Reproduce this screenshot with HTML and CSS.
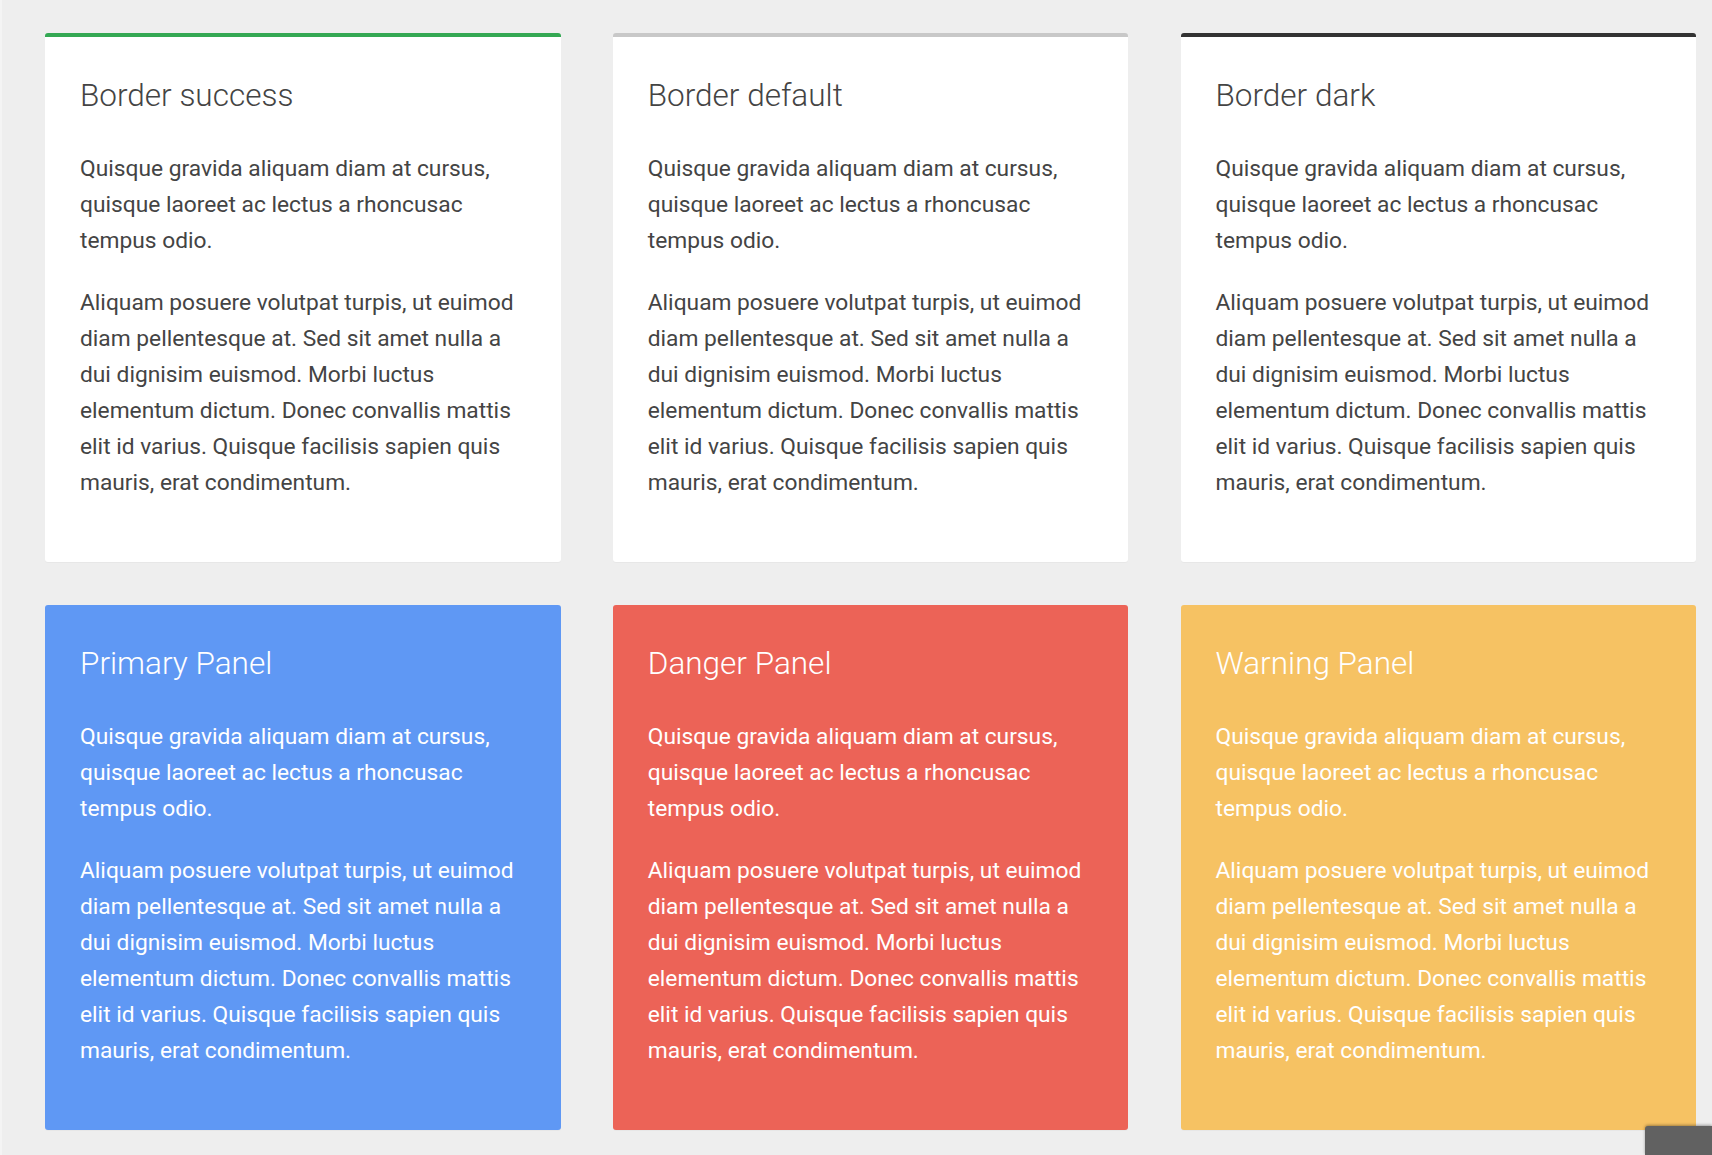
FILE: index.html
```html
<!DOCTYPE html>
<html lang="en">
<head>
<meta charset="utf-8">
<title>Panels</title>
<link rel="stylesheet" href="styles.css">
</head>
<body>
<div class="page">
  <div class="grid">
    <div class="card card-border border-success">
      <h3 class="card-title">Border success</h3>
      <p>Quisque gravida aliquam diam at cursus, quisque laoreet ac lectus a rhoncusac tempus odio.</p>
      <p>Aliquam posuere volutpat turpis, ut euimod diam pellentesque at. Sed sit amet nulla a dui dignisim euismod. Morbi luctus elementum dictum. Donec convallis mattis elit id varius. Quisque facilisis sapien quis mauris, erat condimentum.</p>
    </div>
    <div class="card card-border border-default">
      <h3 class="card-title">Border default</h3>
      <p>Quisque gravida aliquam diam at cursus, quisque laoreet ac lectus a rhoncusac tempus odio.</p>
      <p>Aliquam posuere volutpat turpis, ut euimod diam pellentesque at. Sed sit amet nulla a dui dignisim euismod. Morbi luctus elementum dictum. Donec convallis mattis elit id varius. Quisque facilisis sapien quis mauris, erat condimentum.</p>
    </div>
    <div class="card card-border border-dark">
      <h3 class="card-title">Border dark</h3>
      <p>Quisque gravida aliquam diam at cursus, quisque laoreet ac lectus a rhoncusac tempus odio.</p>
      <p>Aliquam posuere volutpat turpis, ut euimod diam pellentesque at. Sed sit amet nulla a dui dignisim euismod. Morbi luctus elementum dictum. Donec convallis mattis elit id varius. Quisque facilisis sapien quis mauris, erat condimentum.</p>
    </div>
    <div class="card card-filled panel-primary">
      <h3 class="card-title">Primary Panel</h3>
      <p>Quisque gravida aliquam diam at cursus, quisque laoreet ac lectus a rhoncusac tempus odio.</p>
      <p>Aliquam posuere volutpat turpis, ut euimod diam pellentesque at. Sed sit amet nulla a dui dignisim euismod. Morbi luctus elementum dictum. Donec convallis mattis elit id varius. Quisque facilisis sapien quis mauris, erat condimentum.</p>
    </div>
    <div class="card card-filled panel-danger">
      <h3 class="card-title">Danger Panel</h3>
      <p>Quisque gravida aliquam diam at cursus, quisque laoreet ac lectus a rhoncusac tempus odio.</p>
      <p>Aliquam posuere volutpat turpis, ut euimod diam pellentesque at. Sed sit amet nulla a dui dignisim euismod. Morbi luctus elementum dictum. Donec convallis mattis elit id varius. Quisque facilisis sapien quis mauris, erat condimentum.</p>
    </div>
    <div class="card card-filled panel-warning">
      <h3 class="card-title">Warning Panel</h3>
      <p>Quisque gravida aliquam diam at cursus, quisque laoreet ac lectus a rhoncusac tempus odio.</p>
      <p>Aliquam posuere volutpat turpis, ut euimod diam pellentesque at. Sed sit amet nulla a dui dignisim euismod. Morbi luctus elementum dictum. Donec convallis mattis elit id varius. Quisque facilisis sapien quis mauris, erat condimentum.</p>
    </div>
  </div>
</div>
<div class="back-top"></div>
</body>
</html>
```

FILE: styles.css
```css
html, body {
  margin: 0;
  padding: 0;
}
body {
  background: #eeeeee;
  font-family: Roboto, "Liberation Sans", Arial, sans-serif;
  color: #444444;
  overflow: hidden;
}
.page {
  border-left: 2px solid #f4f4f4;
  min-height: 1155px;
  box-sizing: border-box;
}
.grid {
  display: grid;
  grid-template-columns: repeat(3, 1fr);
  column-gap: 52.25px;
  row-gap: 43px;
  padding: 33px 16px 0 43px;
}
.card {
  border-radius: 3px;
  padding: 35px 35px 35px 35px;
  box-shadow: 0 1px 1px rgba(0, 0, 0, 0.03);
}
.card-border {
  background: #ffffff;
  border-top: 4px solid #cccccc;
}
.border-success { border-top-color: #34a853; }
.border-default { border-top-color: #c8c8c8; }
.border-dark { border-top-color: #333333; }
.card-title {
  font-size: 31.5px;
  font-weight: 300;
  line-height: 37px;
  margin: 5px 0 37px;
  color: #444444;
}
.card p {
  font-size: 22.75px;
  line-height: 36px;
  margin: 0 0 26px;
}
.card-filled,
.card-filled .card-title {
  color: #ffffff;
}
.panel-primary { background: #5f98f4; }
.panel-danger { background: #ec6357; }
.panel-warning { background: #f6c263; }
.back-top {
  position: fixed;
  right: 0;
  bottom: 0;
  width: 67px;
  height: 29px;
  background: #616161;
  border-top-left-radius: 3px;
  box-shadow: 0 -1px 3px rgba(0, 0, 0, 0.35);
}
```
